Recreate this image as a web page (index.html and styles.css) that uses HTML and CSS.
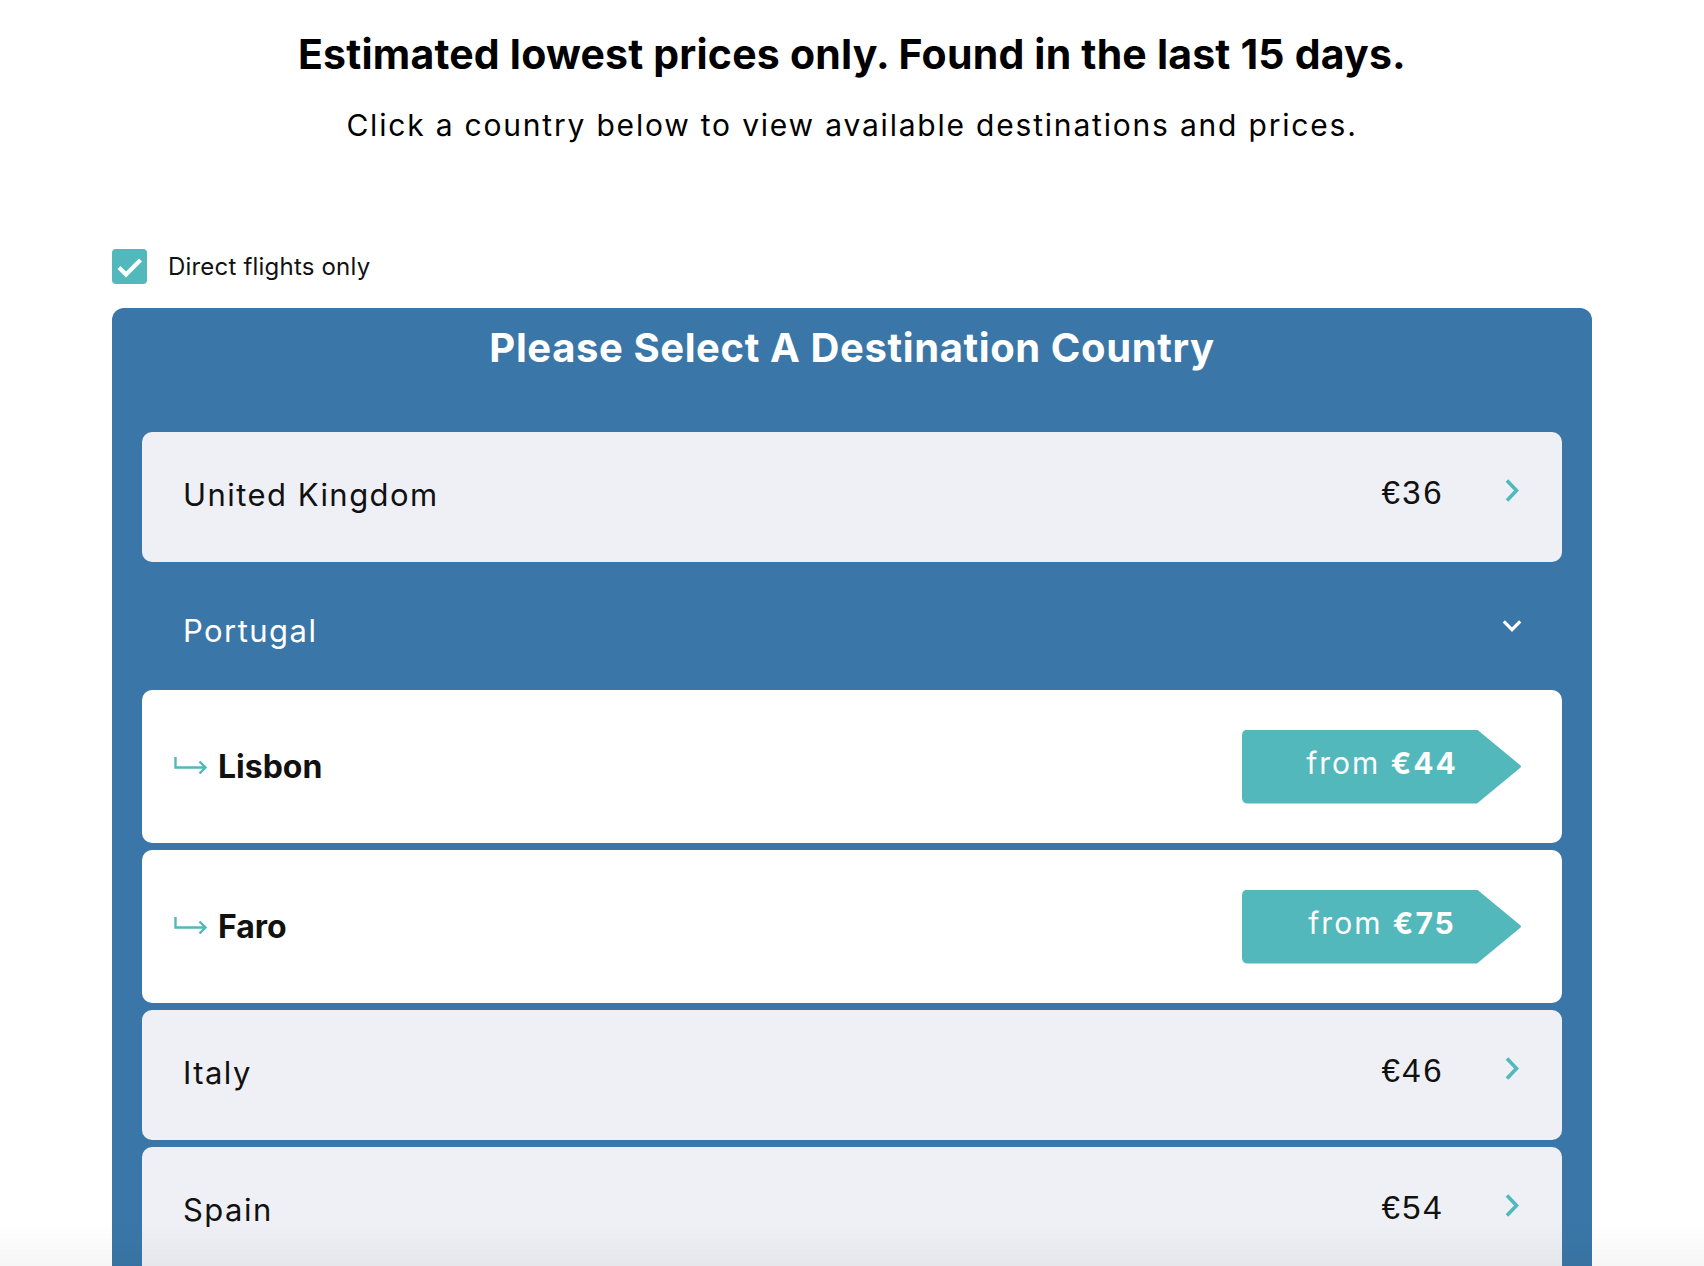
FILE: index.html
```html
<!DOCTYPE html>
<html lang="en">
<head>
<meta charset="utf-8">
<title>Destinations</title>
<link rel="stylesheet" href="styles.css">
</head>
<body>
<header class="intro">
  <h1 class="intro-title">Estimated lowest prices only. Found in the last 15 days.</h1>
  <p class="intro-sub">Click a country below to view available destinations and prices.</p>
</header>
<main class="wrap">
  <label class="direct">
    <span class="check"><svg width="35" height="35" viewBox="0 0 35 35"><path d="M7 18.5 L14 25.5 L28.5 11" fill="none" stroke="#fff" stroke-width="4.2"/></svg></span>
    <span class="direct-label">Direct flights only</span>
  </label>
  <section class="panel">
    <h2 class="panel-title">Please Select A Destination Country</h2>
    <ul class="list">
      <li class="country">
        <span class="country-name">United Kingdom</span>
        <span class="price">€36</span>
        <span class="icon"><svg width="14" height="23" viewBox="0 0 14 23"><path d="M2 1.5 L11.5 11.5 L2 21.5" fill="none" stroke="#52b8bc" stroke-width="3.6"/></svg></span>
      </li>
      <li class="country open">
        <span class="country-name">Portugal</span>
        <span class="icon"><svg width="22" height="14" viewBox="0 0 22 14"><path d="M2 2 L11 11 L20 2" fill="none" stroke="#fff" stroke-width="3.6"/></svg></span>
      </li>
      <li class="dest">
        <svg class="hook" width="34" height="17" viewBox="0 0 34 17"><path d="M1.5 0 V10.5 H31.5 M25.5 4.5 L31.5 10.5 L25.5 16.5" fill="none" stroke="#52b8bc" stroke-width="2.4"/></svg>
        <span class="dest-name">Lisbon</span>
        <span class="tag">from&nbsp;<b>€44</b></span>
      </li>
      <li class="dest">
        <svg class="hook" width="34" height="17" viewBox="0 0 34 17"><path d="M1.5 0 V10.5 H31.5 M25.5 4.5 L31.5 10.5 L25.5 16.5" fill="none" stroke="#52b8bc" stroke-width="2.4"/></svg>
        <span class="dest-name">Faro</span>
        <span class="tag">from&nbsp;<b>€75</b></span>
      </li>
      <li class="country">
        <span class="country-name">Italy</span>
        <span class="price">€46</span>
        <span class="icon"><svg width="14" height="23" viewBox="0 0 14 23"><path d="M2 1.5 L11.5 11.5 L2 21.5" fill="none" stroke="#52b8bc" stroke-width="3.6"/></svg></span>
      </li>
      <li class="country">
        <span class="country-name">Spain</span>
        <span class="price">€54</span>
        <span class="icon"><svg width="14" height="23" viewBox="0 0 14 23"><path d="M2 1.5 L11.5 11.5 L2 21.5" fill="none" stroke="#52b8bc" stroke-width="3.6"/></svg></span>
      </li>
    </ul>
  </section>
</main>
<div class="fade"></div>
</body>
</html>
```

FILE: styles.css
```css
* { box-sizing: border-box; }
html, body { margin: 0; padding: 0; background: #fff; }
body { font-family: Inter, "Open Sans", sans-serif; color: #000; }

.intro { padding-top: 30px; text-align: center; }
.intro-title { margin: 0; font-size: 41px; line-height: 48px; font-weight: 700; letter-spacing: 0.2px; }
.intro-sub { margin: 29px 0 0; font-size: 30px; line-height: 36px; font-weight: 400; letter-spacing: 1.8px; }

.wrap { width: 1480px; margin: 106px auto 0; }

.direct { display: flex; align-items: center; gap: 21px; height: 35px; }
.check { width: 35px; height: 35px; border-radius: 4px; background: #52b8bc; display: flex; }
.direct-label { font-size: 24px; line-height: 35px; color: #111; letter-spacing: 0.2px; }

.panel { margin-top: 24px; background: #3a77a8; border-radius: 12px 12px 0 0; padding: 16px 30px 30px; }
.panel-title { margin: 0 0 60px; text-align: center; color: #fff; font-size: 40px; line-height: 48px; font-weight: 700; letter-spacing: 0.6px; }

.list { list-style: none; margin: 0; padding: 0; display: flex; flex-direction: column; gap: 7px; }

.country { height: 130px; background: #eef0f5; border-radius: 10px; display: flex; align-items: center; padding: 0 40px 0 41px; }
.country.open { height: 114px; background: transparent; color: #fff; }
.country.open .country-name { padding-top: 9px; padding-bottom: 0; color: #fff; }
.country.open .icon { padding-bottom: 0; }
.country-name { flex: 1; font-size: 31px; color: #111; letter-spacing: 1.45px; padding-bottom: 6px; }
.price { font-family: "Liberation Sans", Arial, sans-serif; font-size: 33px; letter-spacing: 2.5px; color: #111; margin-right: 58px; padding-bottom: 8px; }
.icon { width: 20px; display: flex; justify-content: center; align-items: center; padding-bottom: 14px; }

.dest { height: 153px; background: #fff; border-radius: 10px; display: flex; align-items: center; padding: 0 40px 0 32px; }
.hook { flex: none; margin-right: 10px; margin-bottom: 2px; }
.dest-name { flex: 1; font-size: 32px; font-weight: 700; color: #111; }
.tag { width: 280px; height: 74px; background: #52b8bc; color: #fff; font-size: 30px; display: flex; align-items: center; justify-content: center; padding-bottom: 8px; letter-spacing: 2px;
  clip-path: path('M6 0 H235 L278 35.5 Q280 37 278 38.5 L235 74 H6 Q0 74 0 68 V6 Q0 0 6 0 Z'); }
.tag b { font-weight: 700; }

.fade { position: fixed; left: 0; right: 0; bottom: 0; height: 44px; pointer-events: none; background: linear-gradient(to bottom, rgba(0,0,0,0), rgba(0,0,0,0.035)); }
```
